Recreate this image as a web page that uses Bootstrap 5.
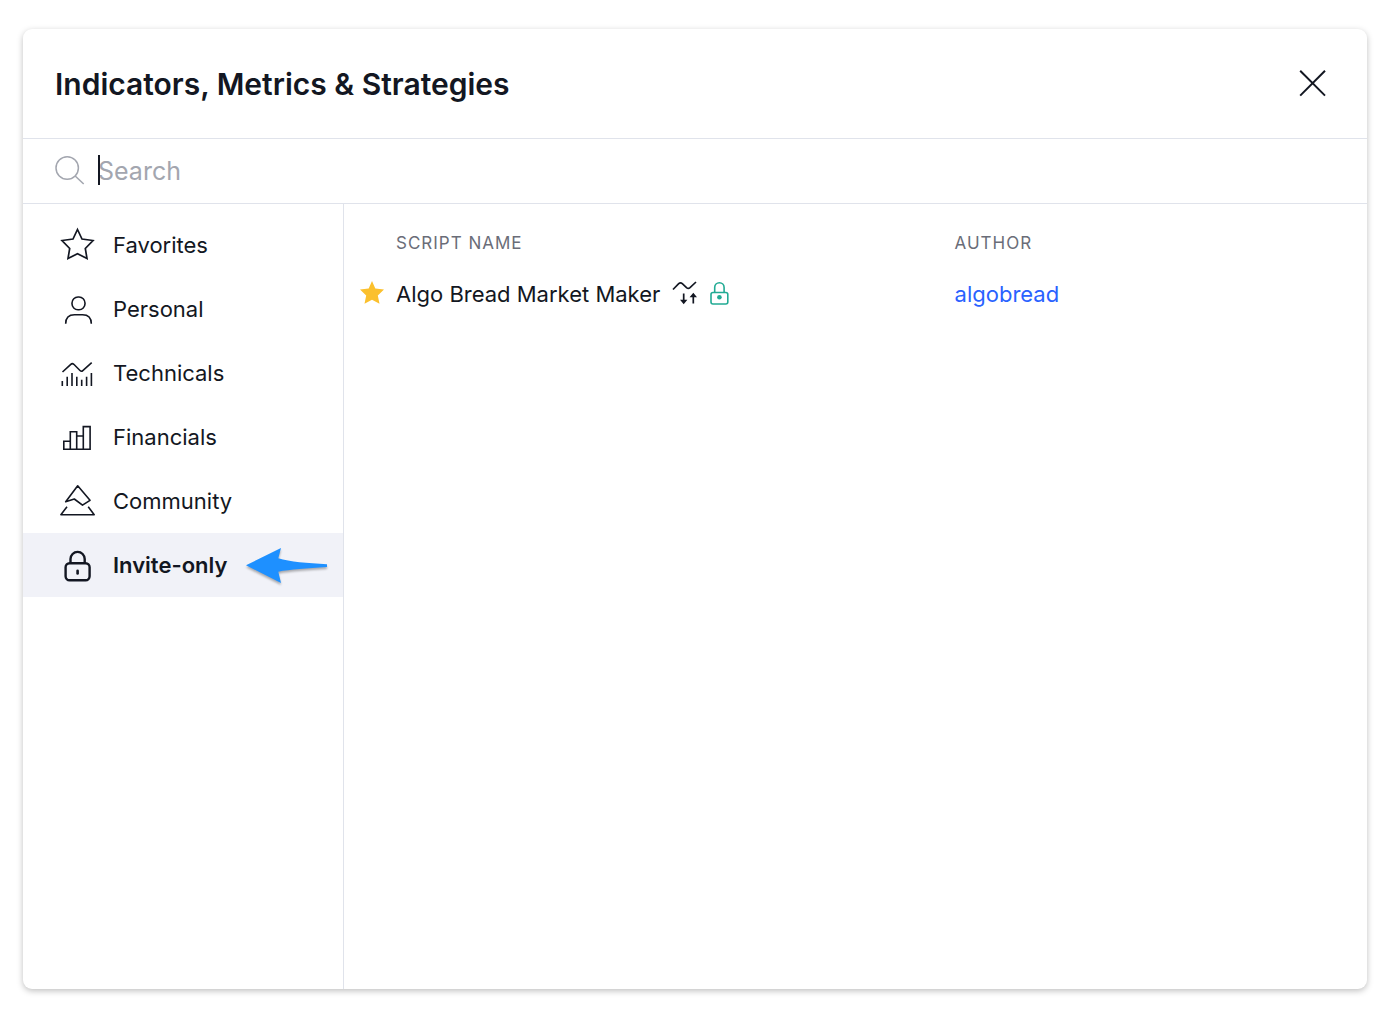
<!DOCTYPE html>
<html lang="en">
<head>
<meta charset="utf-8">
<meta name="viewport" content="width=device-width, initial-scale=1">
<title>Indicators, Metrics &amp; Strategies</title>
<link rel="stylesheet" href="https://cdn.jsdelivr.net/npm/bootstrap@5.3.0/dist/css/bootstrap.min.css">
<style>
  body { font-family: Inter, "Liberation Sans", sans-serif; color: #131722; background: #fff; }
  .page-wrap { min-height: 100vh; padding: 29px 27px 27px 23px; }
  .dialog-panel { border-radius: 9px; background: #fff; box-shadow: 0 2px 6px rgba(0, 0, 0, .25); }
  .line-b { border-bottom: 1px solid #e0e3eb; }
  .dialog-head { height: 110px; padding: 0 32px; }
  .dialog-title { font-size: 30px; line-height: 40px; font-weight: 600; }
  .plain-btn { border: 0; background: none; padding: 0; color: inherit; line-height: 0; }
  .close-btn { padding: 8px; }
  svg { display: block; flex: none; }
  .search-row { height: 65px; padding: 0 32px; gap: 13px; }
  .search-row svg { color: #a3a6af; }
  .search-field { display: block; border: 0; outline: 0; padding: 0; width: 100%; font-size: 25px; line-height: 32px; background: none; color: inherit; }
  .search-field::placeholder { color: #a3a6af; opacity: 1; }
  .text-caret { position: absolute; left: 0; top: 0; width: 2px; height: 30px; background: #131722; }
  .side-menu { width: 321px; padding-top: 9px; border-right: 1px solid #e0e3eb; }
  .side-item { height: 64px; padding-left: 37px; gap: 17px; font-size: 22px; line-height: 28px; color: inherit; text-decoration: none; }
  .side-item.active { background: #f1f2f8; font-weight: 600; }
  .arrow-mark { filter: drop-shadow(0 2px 1px rgba(0, 0, 0, .3)); }
  .script-pane { padding-top: 12px; }
  .script-table { width: 100%; table-layout: fixed; }
  .script-table th { height: 54px; font-size: 17px; line-height: 24px; font-weight: 400; letter-spacing: 1px; color: #6a6d78; }
  .script-table td { height: 48px; font-size: 22px; line-height: 28px; }
  .col-star { width: 51px; }
  .col-script { width: 54.6%; }
  .name-cell { gap: 12px; }
  .script-table a { color: #2962ff; text-decoration: none; }
</style>
</head>
<body>
<div class="page-wrap d-flex">
  <div class="dialog-panel d-flex flex-column flex-grow-1" role="dialog" aria-labelledby="dialogTitle">
    <header class="dialog-head line-b d-flex align-items-center justify-content-between">
      <h1 class="dialog-title m-0" id="dialogTitle">Indicators, Metrics &amp; Strategies</h1>
      <button type="button" class="plain-btn close-btn" aria-label="Close">
        <svg width="30" height="30" viewBox="0 0 30 30" fill="none" stroke="currentColor" stroke-width="2"><path d="M3.200 1.800l24.800 24.800M28 1.800l-24.800 24.800"/></svg>
      </button>
    </header>

    <div class="search-row line-b d-flex align-items-center">
      <svg width="30" height="30" viewBox="0 0 30 30" fill="none" stroke="currentColor" stroke-width="1.500"><circle cx="12.200" cy="12" r="11.200"/><path d="M20.200 20l8.500 8"/></svg>
      <div class="position-relative flex-grow-1">
        <input type="text" class="search-field" placeholder="Search" aria-label="Search">
        <span class="text-caret"></span>
      </div>
    </div>

    <div class="d-flex flex-grow-1">
      <nav class="side-menu flex-shrink-0" aria-label="Categories">
        <a href="#" class="side-item d-flex align-items-center">
          <svg width="36" height="36" viewBox="0 0 36 36" fill="none" stroke="currentColor" stroke-width="1.700"><path d="M17.500 2.500L22 12l11 1.500-7.700 8L27 31.500l-9.500-4.800L8 31.500l1.700-10L2 13.500 13 12z"/></svg>
          <span>Favorites</span>
        </a>
        <a href="#" class="side-item d-flex align-items-center">
          <svg width="36" height="36" viewBox="0 0 36 36" fill="none" stroke="currentColor" stroke-width="1.600"><rect x="12" y="6" width="13" height="12.800" rx="6"/><path d="M5.700 32.700C5.700 27 9 23.700 14.500 23.700h8C28 23.700 31.300 27 31.300 32.700"/></svg>
          <span>Personal</span>
        </a>
        <a href="#" class="side-item d-flex align-items-center">
          <svg width="36" height="36" viewBox="0 0 36 36" fill="none" stroke="currentColor" stroke-width="1.600"><path d="M2.500 17l8.300-7.700q1.500-1.400 3 0l6.200 6.200q1.400 1.400 2.800.1L31.700 7.700"/><path d="M2.300 31v-5M7.200 31v-9.300M12 31V18M16.800 31v-9.300M21.700 31v-6.300M26.600 31v-9.300M31.400 31V18"/></svg>
          <span>Technicals</span>
        </a>
        <a href="#" class="side-item d-flex align-items-center">
          <svg width="36" height="36" viewBox="0 0 36 36" fill="none" stroke="currentColor" stroke-width="1.600"><path d="M3.800 22.300h6.500v8H3.800zM10.300 12.700h6.400v17.600h-6.400zM16.700 17h6.600v13.300h-6.600zM23.300 7.600h6.800v22.700h-6.800z"/></svg>
          <span>Financials</span>
        </a>
        <a href="#" class="side-item d-flex align-items-center">
          <svg width="36" height="36" viewBox="0 0 36 36" fill="none" stroke="currentColor" stroke-width="1.600" stroke-linejoin="round"><path d="M17.700 2.800L30 17.300l-7.500 4.900-8.200-6.200-8.600 2.700zM7 23.700L.9 31.700h33.300l-6-8"/></svg>
          <span>Community</span>
        </a>
        <a href="#" class="side-item active d-flex align-items-center" aria-current="page">
          <svg width="36" height="36" viewBox="0 0 36 36" fill="none" stroke="currentColor" stroke-width="2.400"><rect x="5.600" y="16.200" width="24" height="17" rx="4"/><path d="M10.500 16.200V12a7.100 7.100 0 0 1 14.200 0v4.200"/><path d="M17.600 23.800v2.600" stroke-width="2.600" stroke-linecap="round"/></svg>
          <span>Invite-only</span>
          <svg class="arrow-mark" width="84" height="40" viewBox="0 0 84 40" fill="#1e90ff" aria-hidden="true"><path d="M2 20.300L37 3l-2.700 10.300C46 17 63 18 83 19.300v2.800C63 23.500 46 24.500 34.300 26.700L37 38z"/></svg>
        </a>
      </nav>

      <main class="script-pane flex-grow-1">
        <table class="script-table">
          <colgroup><col class="col-star"><col class="col-script"><col></colgroup>
          <thead>
            <tr><th></th><th scope="col">SCRIPT NAME</th><th scope="col">AUTHOR</th></tr>
          </thead>
          <tbody>
            <tr>
              <td class="ps-3">
                <button type="button" class="plain-btn d-flex" aria-label="Remove from favorites">
                  <svg width="24" height="26" viewBox="0 0 24 26" fill="#fbc02d"><path d="M12 0l3.300 7.600 8.700.9-6.200 6 1.700 8.300L12 18.800l-7.500 4 1.700-8.300L0 8.500l8.700-.9z"/></svg>
                </button>
              </td>
              <td>
                <div class="name-cell d-flex align-items-center">
                  <span>Algo Bread Market Maker</span>
                  <svg width="26" height="26" viewBox="0 0 26 26" fill="none" stroke="currentColor" stroke-width="1.700"><path d="M1 8.500l5.700-5.800q1.800-1.500 3.600 0l4.200 4q1.800 1.500 3.500 0l6-5.700"/><path d="M11.700 12.500v8M21.300 22.500v-8"/><path d="M8 18.800h7.400l-3.700 4.400zM17.600 16.200H25l-3.700-4.500z" fill="currentColor" stroke="none"/></svg>
                  <svg width="20" height="26" viewBox="0 0 20 26" fill="none" stroke="#22ab94" stroke-width="1.600"><rect x="1" y="11.500" width="16.800" height="11.500" rx="2"/><path d="M4.700 11.500V6.500a4.700 4.700 0 0 1 9.400 0v5"/><circle cx="9.400" cy="16.300" r="2.300" fill="#22ab94" stroke="none"/></svg>
                </div>
              </td>
              <td><a href="#">algobread</a></td>
            </tr>
          </tbody>
        </table>
      </main>
    </div>
  </div>
</div>
<script src="https://cdn.jsdelivr.net/npm/bootstrap@5.3.0/dist/js/bootstrap.bundle.min.js"></script>
</body>
</html>
